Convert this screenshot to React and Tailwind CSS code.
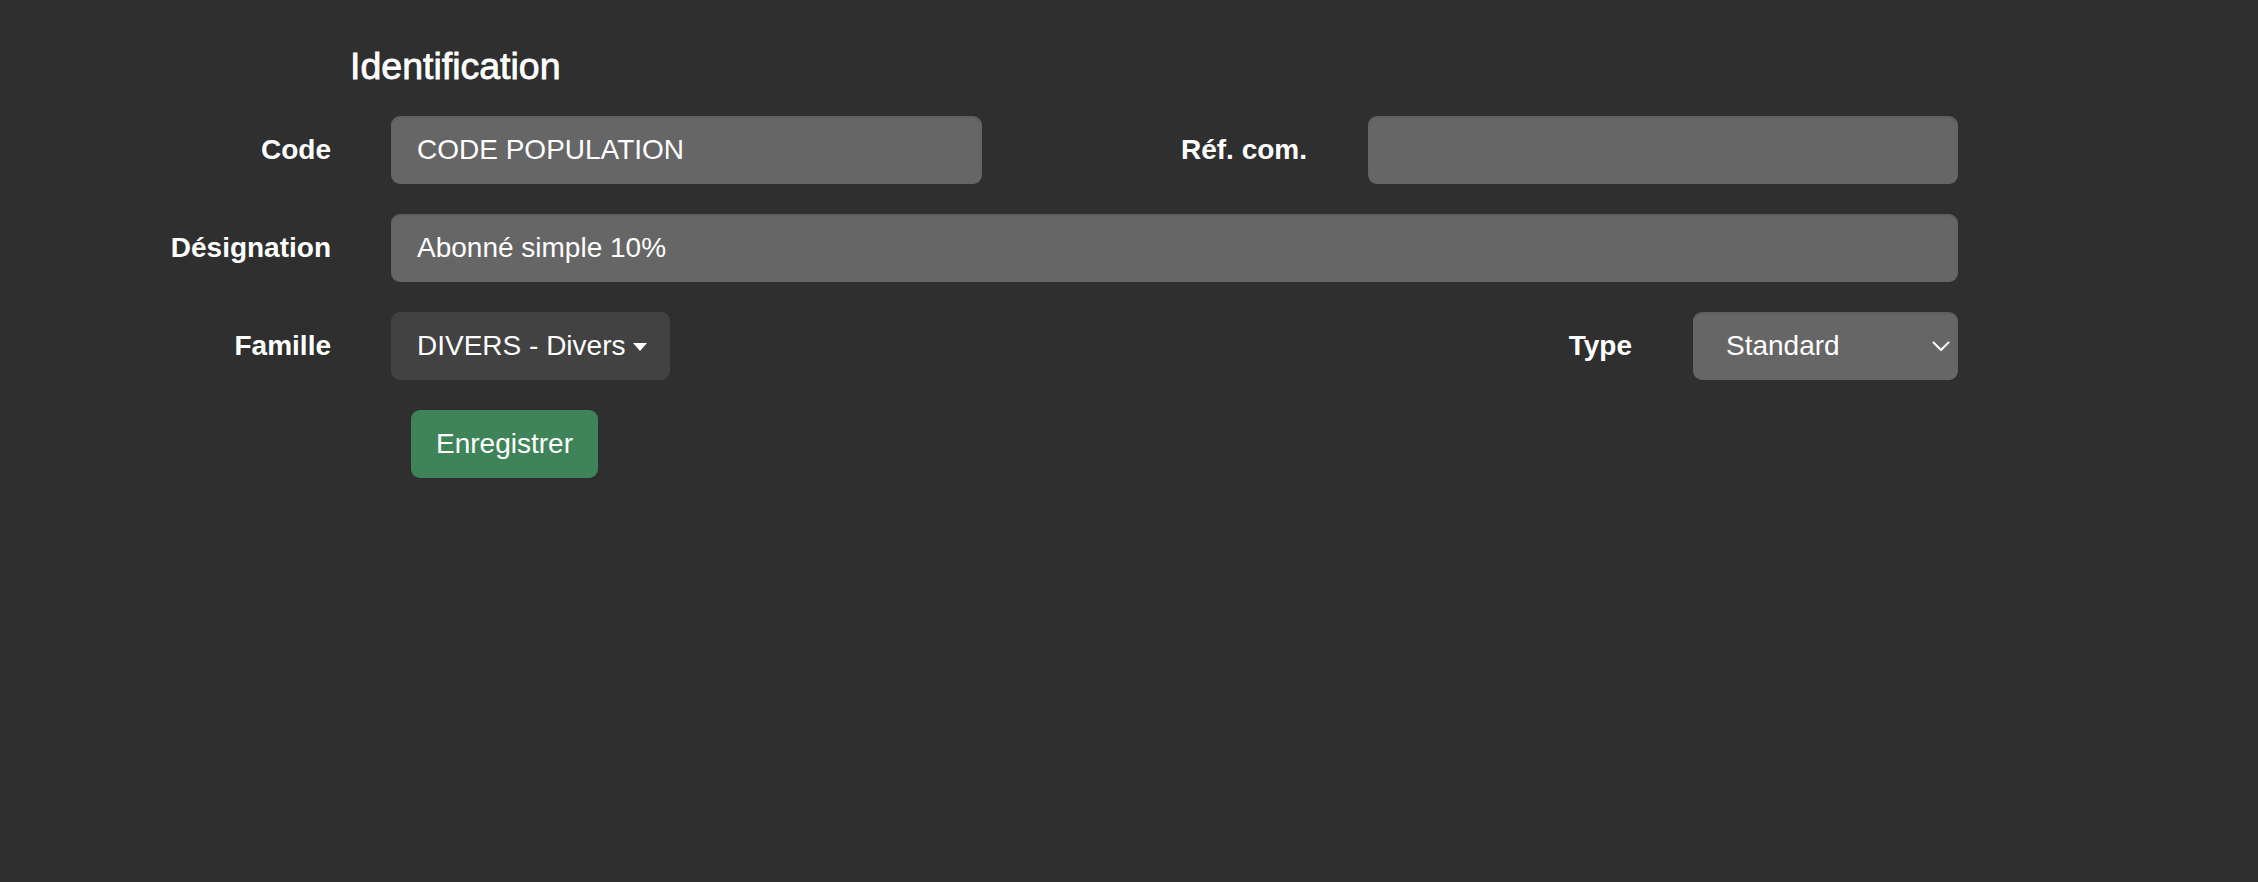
export default function App() {
  const font = "font-['Liberation_Sans',Arial,Helvetica,sans-serif]";
  return (
    <div className={`min-h-screen w-full bg-[#2f2f2f] text-white ${font}`}>
      <div className="w-[1958px] pl-[150px] pt-[44px]">
        <h5 className="ml-[200px] text-[37.5px] leading-[44px] font-normal [-webkit-text-stroke:0.8px_white]">Identification</h5>
        <div className="mt-[28px] flex flex-col gap-[30px]">
          {/* Row 1 */}
          <div className="flex h-[68px] items-center">
            <label className="w-[181px] text-right text-[28px] font-bold leading-[34px]">Code</label>
            <div className="ml-[60px] flex h-[68px] w-[591px] items-center rounded-[9px] bg-[#666666] pl-[26px] text-[28px] leading-[34px] shadow-[inset_0_2px_2px_rgba(0,0,0,0.08)]">
              CODE POPULATION
            </div>
            <label className="w-[325px] text-right text-[28px] font-bold leading-[34px]">Réf. com.</label>
            <div className="ml-[61px] h-[68px] w-[590px] rounded-[9px] bg-[#666666] shadow-[inset_0_2px_2px_rgba(0,0,0,0.08)]"></div>
          </div>
          {/* Row 2 */}
          <div className="flex h-[68px] items-center">
            <label className="w-[181px] text-right text-[28px] font-bold leading-[34px]">Désignation</label>
            <div className="ml-[60px] flex h-[68px] w-[1567px] items-center rounded-[9px] bg-[#666666] pl-[26px] text-[28px] leading-[34px] shadow-[inset_0_2px_2px_rgba(0,0,0,0.08)]">
              Abonné simple 10%
            </div>
          </div>
          {/* Row 3 */}
          <div className="flex h-[68px] items-center">
            <label className="w-[181px] text-right text-[28px] font-bold leading-[34px]">Famille</label>
            <button className="ml-[60px] flex h-[68px] w-[279px] items-center rounded-[9px] bg-[#424242] pl-[26px] text-[28px] leading-[34px] text-white">
              <span>DIVERS - Divers</span>
              <span className="ml-[8px] mt-[2px] h-0 w-0 border-l-[7px] border-r-[7px] border-t-[8px] border-l-transparent border-r-transparent border-t-white"></span>
            </button>
            <div className="flex-1"></div>
            <label className="text-right text-[28px] font-bold leading-[34px]">Type</label>
            <div className="ml-[61px] flex h-[68px] w-[265px] items-center justify-between rounded-[9px] bg-[#666666] pl-[33px] pr-[8px] text-[28px] leading-[34px] shadow-[inset_0_2px_2px_rgba(0,0,0,0.08)]">
              <span>Standard</span>
              <svg width="18" height="11" viewBox="0 0 18 11" fill="none">
                <path d="M1.5 1.5 L9 9 L16.5 1.5" stroke="white" strokeWidth="2" strokeLinecap="round" strokeLinejoin="round" />
              </svg>
            </div>
          </div>
          {/* Row 4 */}
          <div className="flex">
            <button className="ml-[261px] flex h-[68px] w-[187px] items-center justify-center rounded-[9px] bg-[#3f8459] text-[28px] leading-[34px] text-white">
              Enregistrer
            </button>
          </div>
        </div>
      </div>
    </div>
  );
}
